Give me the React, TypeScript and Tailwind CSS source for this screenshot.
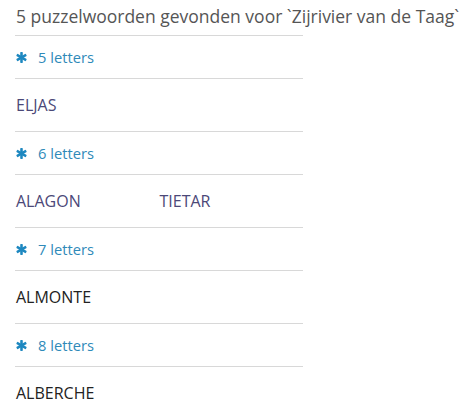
import React from "react";

const groups = [
  { n: 5, words: [{ w: "ELJAS", v: true }] },
  { n: 6, words: [{ w: "ALAGON", v: true }, { w: "TIETAR", v: true }] },
  { n: 7, words: [{ w: "ALMONTE", v: false }] },
  { n: 8, words: [{ w: "ALBERCHE", v: false }] },
];

function Star() {
  return (
    <svg viewBox="0 0 12 12" className="w-[11px] h-[11px] mr-[11px]" fill="#1e88c0">
      <rect x="4.6" y="0" width="2.8" height="12" rx="0.8" />
      <rect x="4.6" y="0" width="2.8" height="12" rx="0.8" transform="rotate(60 6 6)" />
      <rect x="4.6" y="0" width="2.8" height="12" rx="0.8" transform="rotate(-60 6 6)" />
    </svg>
  );
}

export default function App() {
  return (
    <div className="bg-white w-[469px] h-[414px] overflow-hidden pl-[15px]" style={{ fontFamily: '"Open Sans", sans-serif' }}>
      <div className="h-[35px] flex items-center whitespace-nowrap text-[17.5px] text-[#555] pl-px pb-[2px]">
        5 puzzelwoorden gevonden voor `Zijrivier van de Taag`
      </div>
      <div className="w-[288px]">
        {groups.map((g) => (
          <div key={g.n}>
            <div className="border-t border-[#d8d8d8] h-[43px] flex items-center text-[14.7px] text-[#2f8ab9] pl-px">
              <Star />
              <span>{g.n} letters</span>
            </div>
            <div className="border-t border-[#d8d8d8] h-[53px] flex items-center text-[16px] pl-px">
              {g.words.map((x) => (
                <span key={x.w} className={`w-[144px] ${x.v ? "text-[#4b4878]" : "text-[#222]"}`}>{x.w}</span>
              ))}
            </div>
          </div>
        ))}
      </div>
    </div>
  );
}
